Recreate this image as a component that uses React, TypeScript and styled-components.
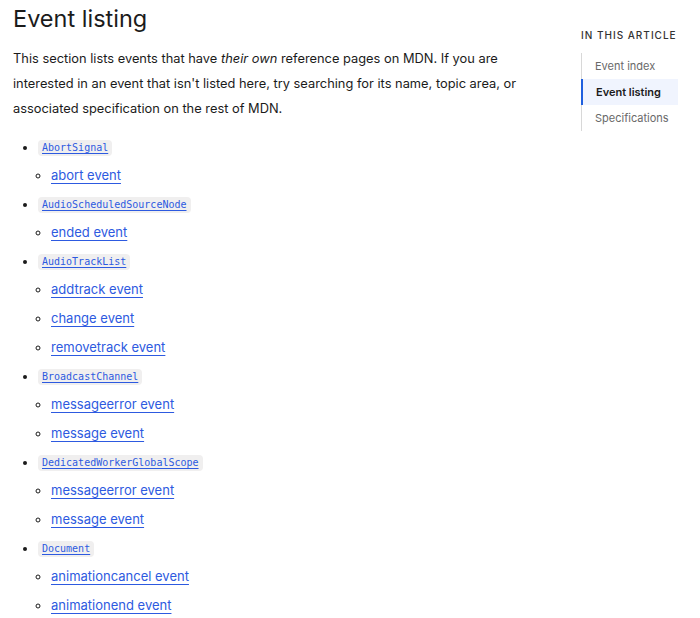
import React from "react";
import styled, { createGlobalStyle } from "styled-components";

const Global = createGlobalStyle`
  html, body { margin: 0; padding: 0; background: #fff; }
  body { font-family: Inter, "Noto Sans", sans-serif; color: #1b1b1b; }
  * { box-sizing: border-box; }
`;

const Page = styled.div`
  display: flex;
  align-items: flex-start;
  width: 700px;
  padding: 4px 22px 0 13px;
`;

const Main = styled.main`
  flex: 1;
  min-width: 0;
`;

const Heading = styled.h2`
  margin: 0;
  font-size: 23.5px;
  line-height: 29px;
  font-weight: 400;
  color: #1b1b1b;
`;

const Para = styled.p`
  margin: 13px 0 0;
  font-size: 12.85px;
  line-height: 25px;
  color: #1b1b1b;
  max-width: 540px;
`;

const TopList = styled.ul`
  margin: 16px 0 0;
  padding-left: 25px;
  list-style: disc;
`;

const SubList = styled.ul`
  margin: 7px 0 0;
  padding-left: 13px;
  list-style: circle;
`;

const Item = styled.li`
  font-size: 13px;
  line-height: 21px;
  margin-bottom: 8px;
`;

const Code = styled.a`
  display: inline-block;
  font-family: "DejaVu Sans Mono", monospace;
  font-size: 10px;
  line-height: 16px;
  padding: 0 4px;
  background: #f0efef;
  border-radius: 4px;
  color: #2d5ae0;
  text-decoration: underline;
  text-underline-offset: 2px;
  vertical-align: 1px;
`;

const Link = styled.a`
  color: #2d5ae0;
  text-decoration: underline;
  text-underline-offset: 3px;
  text-decoration-thickness: 1px;
`;

const Aside = styled.aside`
  width: 97px;
  flex: none;
  padding-top: 21px;
`;

const AsideTitle = styled.div`
  font-size: 10px;
  font-weight: 500;
  letter-spacing: 1px;
  text-transform: uppercase;
  color: #333;
  line-height: 20px;
  white-space: nowrap;
`;

const Nav = styled.ul`
  list-style: none;
  margin: 8px 0 0;
  padding: 0;
  border-left: 1px solid #d8d8d8;
`;

const NavItem = styled.li<{ $active?: boolean }>`
  font-size: 11px;
  line-height: 26px;
  padding-left: 13px;
  margin-left: ${(p) => (p.$active ? "-1px" : "0")};
  border-left: ${(p) => (p.$active ? "2px solid #1f5fde" : "none")};
  background: ${(p) => (p.$active ? "#f0f4fe" : "transparent")};
  font-weight: ${(p) => (p.$active ? 600 : 400)};
  color: ${(p) => (p.$active ? "#1b1b1b" : "#696969")};
  white-space: nowrap;
`;

const data: [string, string[]][] = [
  ["AbortSignal", ["abort event"]],
  ["AudioScheduledSourceNode", ["ended event"]],
  ["AudioTrackList", ["addtrack event", "change event", "removetrack event"]],
  ["BroadcastChannel", ["messageerror event", "message event"]],
  ["DedicatedWorkerGlobalScope", ["messageerror event", "message event"]],
  ["Document", ["animationcancel event", "animationend event"]],
];

export default function App() {
  return (
    <>
      <Global />
      <Page>
        <Main>
          <Heading>Event listing</Heading>
          <Para>
            This section lists events that have <em>their own</em> reference pages on MDN. If you are
            interested in an event that isn't listed here, try searching for its name, topic area, or
            associated specification on the rest of MDN.
          </Para>
          <TopList>
            {data.map(([iface, events]) => (
              <Item key={iface}>
                <Code href="#">{iface}</Code>
                <SubList>
                  {events.map((e) => (
                    <Item key={e}>
                      <Link href="#">{e}</Link>
                    </Item>
                  ))}
                </SubList>
              </Item>
            ))}
          </TopList>
        </Main>
        <Aside>
          <AsideTitle>In this article</AsideTitle>
          <Nav>
            <NavItem>Event index</NavItem>
            <NavItem $active>Event listing</NavItem>
            <NavItem>Specifications</NavItem>
          </Nav>
        </Aside>
      </Page>
    </>
  );
}
